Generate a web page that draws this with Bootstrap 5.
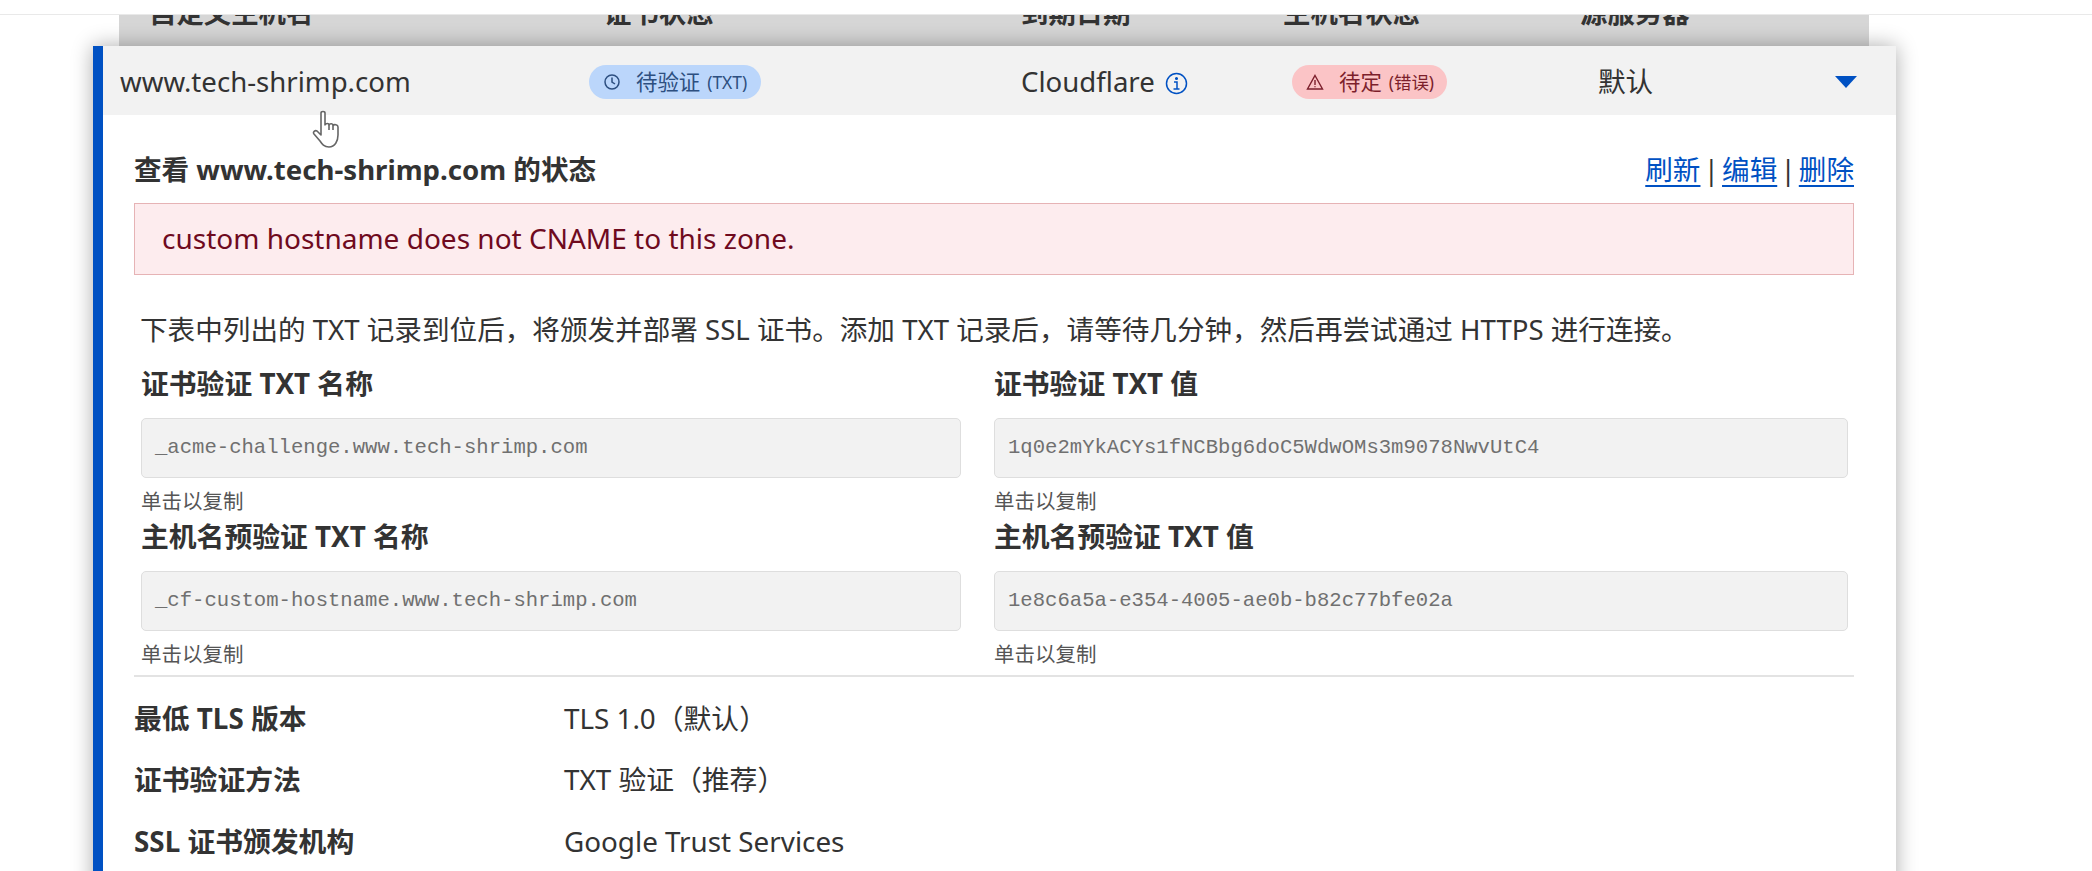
<!DOCTYPE html>
<html lang="zh">
<head>
<meta charset="utf-8">
<title>自定义主机名</title>
<link href="https://cdn.jsdelivr.net/npm/bootstrap@5.3.0/dist/css/bootstrap.min.css" rel="stylesheet">
<style>
html,body{height:100%;overflow:hidden;background:#fff}
body{font-family:"Noto Sans","Noto Sans CJK SC",sans-serif;color:#333;font-size:27.6px;line-height:36px}
.top-strip{height:15px;background:#fff;border-bottom:1px solid #e9e9e9;position:relative;z-index:3}
.head-bar{margin-left:119px;width:1750px;height:31px;background:#d6d6d6;overflow:hidden;display:grid;grid-template-columns:455px 417px 262px 297px 289px;padding-left:30px;align-items:start;font-weight:700;font-size:27.4px;color:#333}
.head-bar>div{line-height:36px;white-space:nowrap;margin-top:-20px}
.host-card{position:relative;z-index:2;margin-left:93px;width:1803px;height:1200px;background:#fff;border-left:10px solid #0051c3;box-shadow:0 0 20px rgba(0,0,0,.33)}
.sum-row{height:69px;background:#f2f2f2;display:grid;grid-template-columns:469px 432px 271px 306px 1fr 61px;padding-left:17px;align-items:center;white-space:nowrap;line-height:34px}
.pill{display:inline-flex;align-items:center;height:34px;border-radius:17px;font-size:21.4px;line-height:34px;white-space:nowrap}
.pill svg{flex:none}
.pill small{font-size:17.4px;margin-left:7px}
.pill-blue{background:#bbd6fb;color:#2d4f80;width:172px;padding-left:14px}
.pill-red{background:#fbc4c6;color:#7c1f2c;width:155px;padding-left:14px}
.pill-label{margin-left:15px}
.info-ico{margin-left:10px;vertical-align:-3px}
.caret-ico{display:block;margin-top:2px}
.detail{padding:37px 42px 0 31px}
.detail a{color:#0051c3;text-decoration:underline;text-decoration-thickness:2px;text-underline-offset:5px}
.title-row{height:36px;line-height:34px}
.title-row strong{font-size:27.6px}
.title-links{word-spacing:-4px}
.err-box{margin-top:15px;height:72px;background:#fdecee;border:1px solid #e6b3b5;color:#6f0a1e;padding:0 27px;line-height:68px;font-size:28px}
.intro{margin:37px 0 0 6px;font-size:27.6px;line-height:34px;height:36px;white-space:nowrap}
.txt-grid{display:grid;grid-template-columns:820px 854px;column-gap:33px;margin-left:7px;margin-top:18px}
.txt-label{font-weight:700;font-size:27.8px;line-height:34px;height:36px}
.txt-value{margin-top:16px;height:60px;background:#f2f2f2;border:1px solid #dedede;border-radius:5px;font-family:"Liberation Mono",monospace;font-size:20.6px;line-height:58px;color:#707070;padding:0 13px}
.txt-hint{margin-top:9px;font-size:20.5px;line-height:28px;height:28px;color:#555;margin-bottom:4px}
.rule{height:2px;background:#e3e3e3;margin-top:3px}
.kv{display:grid;grid-template-columns:430px 1fr;height:61.5px;align-items:center;font-size:27.8px}
.kv strong{font-weight:700}
.kv-wrap{margin-top:10px}
.hand-ptr{position:absolute;left:312px;top:110px;z-index:5}
</style>
</head>
<body>
<div class="top-strip"></div>
<div class="head-bar">
  <div>自定义主机名</div><div>证书状态</div><div>到期日期</div><div>主机名状态</div><div>源服务器</div>
</div>
<div class="host-card">
  <div class="sum-row">
    <div>www.tech-shrimp.com</div>
    <div><span class="pill pill-blue">
      <svg width="18" height="18" viewBox="0 0 18 18" fill="none" stroke="currentColor" stroke-width="1.5"><circle cx="9" cy="9" r="7"/><path d="M9 4.500V9l3 2"/></svg>
      <span class="pill-label">待验证</span><small>(TXT)</small></span></div>
    <div>Cloudflare<svg class="info-ico" width="23" height="23" viewBox="0 0 23 23" fill="none" stroke="#0051c3" stroke-width="1.5"><circle cx="11.500" cy="11.500" r="10"/><path d="M9 10h3v7M8.500 17h6"/><circle cx="11.500" cy="6.500" r=".8" fill="#0051c3"/></svg></div>
    <div><span class="pill pill-red">
      <svg width="18" height="18" viewBox="0 0 18 18" fill="none" stroke="currentColor" stroke-width="1.4"><path d="M9 2.500 16.500 16h-15zM9 7v5M9 13.200v1"/></svg>
      <span class="pill-label">待定</span><small>(错误)</small></span></div>
    <div>默认</div>
    <div><svg class="caret-ico" width="22" height="12" viewBox="0 0 22 12"><path d="M0 0h22L11 12z" fill="#0051c3"/></svg></div>
  </div>
  <div class="detail">
    <div class="title-row d-flex justify-content-between">
      <strong>查看 www.tech-shrimp.com 的状态</strong>
      <span class="title-links"><a href="#">刷新</a> | <a href="#">编辑</a> | <a href="#">删除</a></span>
    </div>
    <div class="err-box">custom hostname does not CNAME to this zone.</div>
    <div class="intro">下表中列出的 TXT 记录到位后，将颁发并部署 SSL 证书。添加 TXT 记录后，请等待几分钟，然后再尝试通过 HTTPS 进行连接。</div>
    <div class="txt-grid">
      <div>
        <div class="txt-label">证书验证 TXT 名称</div>
        <div class="txt-value">_acme-challenge.www.tech-shrimp.com</div>
        <div class="txt-hint">单击以复制</div>
      </div>
      <div>
        <div class="txt-label">证书验证 TXT 值</div>
        <div class="txt-value">1q0e2mYkACYs1fNCBbg6doC5WdwOMs3m9078NwvUtC4</div>
        <div class="txt-hint">单击以复制</div>
      </div>
      <div>
        <div class="txt-label">主机名预验证 TXT 名称</div>
        <div class="txt-value">_cf-custom-hostname.www.tech-shrimp.com</div>
        <div class="txt-hint">单击以复制</div>
      </div>
      <div>
        <div class="txt-label">主机名预验证 TXT 值</div>
        <div class="txt-value">1e8c6a5a-e354-4005-ae0b-b82c77bfe02a</div>
        <div class="txt-hint">单击以复制</div>
      </div>
    </div>
    <div class="rule"></div>
    <div class="kv-wrap">
      <div class="kv"><strong>最低 TLS 版本</strong><span>TLS 1.0（默认）</span></div>
      <div class="kv"><strong>证书验证方法</strong><span>TXT 验证（推荐）</span></div>
      <div class="kv"><strong>SSL 证书颁发机构</strong><span>Google Trust Services</span></div>
    </div>
  </div>
</div>
<svg class="hand-ptr" width="30" height="40" viewBox="0 0 30 40" fill="#fff" stroke="#666" stroke-width="1.6" stroke-linejoin="round"><path d="M9 3c0-2 4-2 4 0v12c1-2 4-2 4 0 1-2 4-1.500 4 .5 1-1.500 5-1 5 1.500v8c0 6-3 12-9 12-5 0-7-3-9-6L2 24c-1.500-2 1-4 3-3l4 4z"/><path d="M17 15v5M21 15.500V20" fill="none"/></svg>
<script src="https://cdn.jsdelivr.net/npm/bootstrap@5.3.0/dist/js/bootstrap.bundle.min.js"></script>
</body>
</html>
